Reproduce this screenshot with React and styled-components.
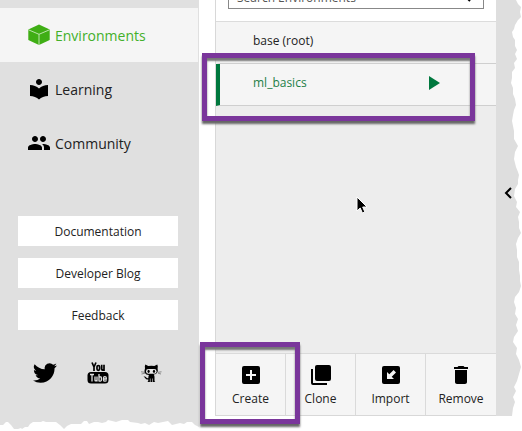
import React from 'react';
import styled, { createGlobalStyle } from 'styled-components';

const purple = '#7a369b';

const Global = createGlobalStyle`
  * { box-sizing: border-box; }
  body { margin: 0; background: #fff; overflow: hidden; font-family: "Open Sans", "Noto Sans", sans-serif; color: #222; }
  button, input { font: inherit; color: inherit; }
  a { color: inherit; text-decoration: none; }
`;
const Page = styled.div`
  position: relative;
  display: grid;
  grid-template-columns: 199px minmax(0, 1fr) 26px;
  height: 100vh;
  overflow: hidden;
`;
const Sidebar = styled.aside`
  position: relative;
  background: #e0e0e0;
  padding-top: 8px;
  display: flex;
  flex-direction: column;
`;
const NavItem = styled.a`
  display: flex;
  align-items: center;
  gap: 4px;
  height: 54px;
  padding-left: 27px;
  margin-right: 1px;
  font-size: 14px;
  color: ${p => (p.$active ? '#43b02a' : '#222')};
  background: ${p => (p.$active ? '#f5f5f5' : 'transparent')};
  svg { color: ${p => (p.$active ? '#3fae14' : '#000')}; }
`;
const Links = styled.div`
  display: grid;
  gap: 12px;
  padding: 46px 21px 0 18px;
`;
const LinkButton = styled.a`
  display: flex;
  align-items: center;
  justify-content: center;
  height: 30px;
  background: #fff;
  font-size: 12px;
`;
const Social = styled.div`
  display: flex;
  justify-content: space-between;
  padding: 31px 36px 0 33px;
  color: #000;
  a { display: flex; }
`;
const Main = styled.main`
  display: flex;
  flex-direction: column;
  margin: 0 0 15px 16px;
  border-left: 1px solid #d8d8d8;
  background: #ededed;
`;
const SearchBar = styled.div`
  display: flex;
  align-items: flex-end;
  height: 22px;
  padding: 0 12px 12px;
  background: #fff;
  border-bottom: 1px solid #dcdcdc;
  overflow: hidden;
`;
const SearchField = styled.label`
  display: flex;
  align-items: center;
  flex: 1;
  height: 22px;
  padding: 0 10px 0 8px;
  border: 1px solid #888;
  background: #fff;
`;
const SearchInput = styled.input`
  flex: 1;
  min-width: 0;
  padding: 0;
  border: 0;
  outline: 0;
  font-size: 12px;
  line-height: 16px;
  &::placeholder { color: #555; opacity: 1; }
`;
const EnvRow = styled.div`
  position: relative;
  display: flex;
  align-items: center;
  justify-content: space-between;
  height: 42px;
  padding: 0 56px 4px 33px;
  border-left: 4px solid ${p => (p.$active ? '#00783e' : '#f5f5f5')};
  border-bottom: 1px solid #cfcfcf;
  background: #f5f5f5;
  color: ${p => (p.$active ? '#1d8048' : '#222')};
  font-size: 12px;
`;
const IconButton = styled.button`
  display: flex;
  padding: 0;
  border: 0;
  background: none;
`;
const EnvSpace = styled.div`
  flex: 1;
  position: relative;
`;
const Pointer = styled.svg`
  position: absolute;
  left: 50%;
  top: 36%;
`;
const Actions = styled.div`
  position: relative;
  display: grid;
  grid-template-columns: repeat(4, 1fr);
  height: 63px;
  border-top: 1px solid #dadada;
  border-bottom: 1px solid #d8d8d8;
  background: #f5f5f5;
`;
const Action = styled.button`
  display: flex;
  flex-direction: column;
  align-items: center;
  padding: 9px 0 0;
  border: 0;
  border-right: 1px solid #dadada;
  background: none;
  font-size: 12px;
  line-height: 20px;
  gap: 2px;
  svg { color: #000; }
  &:last-of-type { border-right: 0; }
`;
const Highlight = styled.div`
  position: absolute;
  inset: ${p => p.$inset};
  z-index: 2;
  border: 5px solid ${purple};
  box-shadow: 0 3px 2px #666, inset 0 3px 2px #777;
  pointer-events: none;
`;
const Edge = styled.aside`
  display: flex;
  align-items: center;
  position: relative;
  background: #dedede;
  margin-bottom: 15px;
  padding: 0 0 31px 8px;
`;
const TornSide = styled.svg`
  position: absolute;
  right: 0;
  top: 0;
  height: 100%;
`;
const TornBottom = styled.svg`
  position: absolute;
  left: 0;
  bottom: 0;
  width: 100%;
`;

const Glyph = ({ size = 24, children, ...rest }) => (
  <svg width={size} height={size} viewBox="0 0 24 24" fill="currentColor" aria-hidden="true" {...rest}>{children}</svg>
);
const Cube = () => (
  <Glyph>
    <path d="M12 1.500 22.700 6.500V17L12 22 1.300 17V6.500z" />
    <path d="M1.500 6.800 12 11.300 22.500 6.800M12 11.300V22" fill="none" stroke="#d8f0cf" strokeWidth=".8" />
  </Glyph>
);
const Reader = () => (
  <Glyph><path d="M12 11.55C9.64 9.35 6.48 8 3 8v11c3.48 0 6.64 1.35 9 3.55 2.36-2.19 5.52-3.55 9-3.55V8c-3.48 0-6.64 1.35-9 3.55zM12 8c1.66 0 3-1.34 3-3s-1.34-3-3-3-3 1.34-3 3 1.34 3 3 3z" /></Glyph>
);
const People = () => (
  <Glyph><path d="M16 11c1.66 0 2.99-1.34 2.99-3S17.66 5 16 5s-3 1.34-3 3 1.34 3 3 3zm-8 0c1.66 0 2.99-1.34 2.99-3S9.66 5 8 5 5 6.34 5 8s1.34 3 3 3zm0 2c-2.33 0-7 1.17-7 3.5V19h14v-2.500c0-2.330-4.670-3.500-7-3.500zm8 0c-.29 0-.62.02-.97.05 1.160.84 1.970 1.970 1.970 3.450V19h6v-2.500c0-2.330-4.670-3.500-7-3.500z" /></Glyph>
);
const Twitter = () => (
  <Glyph><path d="M23.950 4.570a10 10 0 0 1-2.820.77 4.960 4.960 0 0 0 2.160-2.720c-.95.56-2 .96-3.130 1.180a4.920 4.920 0 0 0-8.380 4.480C7.690 8.090 4.070 6.130 1.640 3.160a4.920 4.920 0 0 0 1.520 6.570 4.900 4.900 0 0 1-2.230-.61v.06a4.920 4.920 0 0 0 3.950 4.830 5 5 0 0 1-2.210.08 4.940 4.940 0 0 0 4.600 3.420A9.870 9.870 0 0 1 0 19.540a13.990 13.990 0 0 0 7.550 2.210c9.050 0 14-7.500 14-13.980 0-.21 0-.42-.02-.63a9.940 9.940 0 0 0 2.420-2.570z" /></Glyph>
);
const YouTube = () => (
  <Glyph>
    <g fill="none" stroke="currentColor" strokeWidth="1.700">
      <path d="m6 1.500 2 4.500 2-4.500M8 5.500V10" />
      <rect x="11" y="4.500" width="2.600" height="4.800" rx="1.300" />
      <path d="M15.700 3.800v4.400q0 1.500 2.300.3M18 3.800V10" />
    </g>
    <rect x="1.500" y="11" width="21" height="11.500" rx="3.500" />
    <g fill="none" stroke="#e0e0e0" strokeWidth="1.300">
      <path d="M4 13.500h4M6 13.500v7M9 15.500v3.700q0 1.400 2 .2M11 15.500v5M13 13v7.500M13 16.200q2.400-1 2.400.8v2q0 1.600-2.400.8M17.500 18h2.800v-1q0-1.300-1.400-1.300t-1.400 1.300v2q0 1.200 1.400 1.200t1.400-1" />
    </g>
  </Glyph>
);
const Octocat = () => (
  <Glyph>
    <path d="M6.300 3.500 9.300 5q3-.7 6 0l3-1.500q.9 2 .3 3.700 1.200 5.600-3.800 6.300.7 1 .7 2.500v3.500q0 1 .8 1.500H8.200q1.100-.5 1.100-1.500v-.9q-2.500.2-3.200-1.500-.5-1-1.600-1.500 2-.5 2.800.9.600 1.100 2 .7 0-1.600.6-3.200-6-.6-3.900-6.800-.5-1.700.3-3.700z" />
    <rect x="7" y="8" width="10.600" height="4.800" rx="2.400" fill="#e8e8e8" />
    <ellipse cx="9.600" cy="10.300" rx="1.100" ry="1.600" />
    <ellipse cx="15" cy="10.300" rx="1.100" ry="1.600" />
    <path d="M2 10.800 6 11.300M2.500 13 6 12.200M19 11.300l3.500-.5M19 12.200l3 .8" stroke="currentColor" strokeWidth=".4" />
    <path d="M11.300 17.500v3.500M13.500 17.500v3.500" stroke="#e0e0e0" strokeWidth=".6" />
  </Glyph>
);
const Add = () => (
  <Glyph><path d="M19 3H5a2 2 0 0 0-2 2v14a2 2 0 0 0 2 2h14a2 2 0 0 0 2-2V5a2 2 0 0 0-2-2zm-2 10h-4v4h-2v-4H7v-2h4V7h2v4h4z" /></Glyph>
);
const Copy = () => (
  <Glyph><rect x="6" y="2" width="16" height="16" rx="2" /><path d="M4 6H2v14a2 2 0 0 0 2 2h14v-2H4z" /></Glyph>
);
const ImportIcon = () => (
  <Glyph><rect x="3" y="3" width="18" height="18" rx="2" /><path d="M8 16V9l2.300 2.300L14.600 7 17 9.400l-4.300 4.300L15 16z" fill="#f5f5f5" /></Glyph>
);
const Trash = () => (
  <Glyph><path d="M6 19c0 1.100.9 2 2 2h8c1.100 0 2-.9 2-2V7H6v12zM19 4h-3.500l-1-1h-5l-1 1H5v2h14V4z" /></Glyph>
);

const nav = [
  ['Environments', Cube, true],
  ['Learning', Reader],
  ['Community', People],
];
const actions = [['Create', Add], ['Clone', Copy], ['Import', ImportIcon], ['Remove', Trash]];
const social = [['Twitter', Twitter], ['YouTube', YouTube], ['GitHub', Octocat]];

export default function App() {
  return (
    <>
      <Global />
      <Page>
        <Sidebar>
          <nav>
            {nav.map(([label, Icon, active]) => (
              <NavItem key={label} href="#" $active={active}><Icon />{label}</NavItem>
            ))}
          </nav>
          <Links>
            {['Documentation', 'Developer Blog', 'Feedback'].map(l => <LinkButton key={l} href="#">{l}</LinkButton>)}
          </Links>
          <Social>
            {social.map(([label, Icon]) => <a key={label} href="#" aria-label={label}><Icon /></a>)}
          </Social>
          <TornBottom height="12" viewBox="0 0 199 12" preserveAspectRatio="none" aria-hidden="true">
            <path fill="#fff" d="M0 6 3 6 6 3 8 3 11 6 14 10 18 10 21 9 22 10 25 8 28 8 30 5 33 3 41 3 43 2 46 3 53 3 56 3 60 6 64 10 67 7 71 5 81 5 84 2 87 2 89 5 94 3 98 3 102 4 106 3 108 1 112 2 116 3 119 2 122 1 128 1 130 3 138 4 141 5 145 4 149 6 154 3 158 4 163 3 168 2 172 6 176 5 180 4 184 5 187 3 192 3 195 6 199 8V12H0z" />
          </TornBottom>
        </Sidebar>
        <Main>
          <SearchBar>
            <SearchField>
              <SearchInput aria-label="Search Environments" placeholder="Search Environments" />
              <svg width="14" height="14" viewBox="0 0 14 14" fill="none" stroke="#000" strokeWidth="2" aria-hidden="true"><circle cx="5" cy="4" r="3" /><path d="m7 6 4 4" /></svg>
            </SearchField>
          </SearchBar>
          <EnvRow>base (root)</EnvRow>
          <EnvRow $active>
            ml_basics
            <IconButton aria-label="Run ml_basics">
              <svg width="12" height="14" viewBox="0 0 12 14" fill="#00783e" aria-hidden="true"><path d="M1 0 12 7 1 14z" /></svg>
            </IconButton>
            <Highlight $inset="-11px 21px -16px -18px" />
          </EnvRow>
          <EnvSpace>
            <Pointer width="14" height="20" viewBox="0 0 14 20" aria-hidden="true">
              <path d="M1 2v14l3.200-3 2.200 5 2.500-1-2.200-5H11z" fill="#000" stroke="#fff" />
            </Pointer>
          </EnvSpace>
          <Actions>
            {actions.map(([label, Icon]) => <Action key={label}><Icon />{label}</Action>)}
            <Highlight $inset="-12px 196px -9px -16px" />
          </Actions>
        </Main>
        <Edge>
          <IconButton aria-label="Collapse panel">
            <svg width="9" height="14" viewBox="0 0 9 14" fill="none" stroke="#000" strokeWidth="2" aria-hidden="true"><path d="M7 2 2 7l5 5" /></svg>
          </IconButton>
          <TornSide width="12" viewBox="0 0 12 416" preserveAspectRatio="none" aria-hidden="true">
            <path fill="#fff" d="M6 0 8 4 11 7 10 12 11 17 8 20 5 25 4 29 2 32 3 37 5 40 5 46 7 50 5 54 7 59 4 63 5 68 2 72 2 78 1 83 3 88 3 94 5 99 6 105 4 110 3 115 2 121 3 126 4 131 4 139 8 146 5 152 4 159 6 167 8 172 9 175 8 180 8 184 5 189 4 196 7 202 6 207 10 212 8 217 9 222 9 228 11 233 8 238 6 244 7 250 7 257 9 262 9 270 10 276 10 281 11 286 9 292 5 297 4 302 6 308 5 314 8 319 6 325 8 331 4 337 3 342 7 348 6 354 9 360 11 367 9 374 7 381 4 387 6 391 3 397 5 402 3 408 2 416H12V0z" />
          </TornSide>
        </Edge>
      </Page>
    </>
  );
}
